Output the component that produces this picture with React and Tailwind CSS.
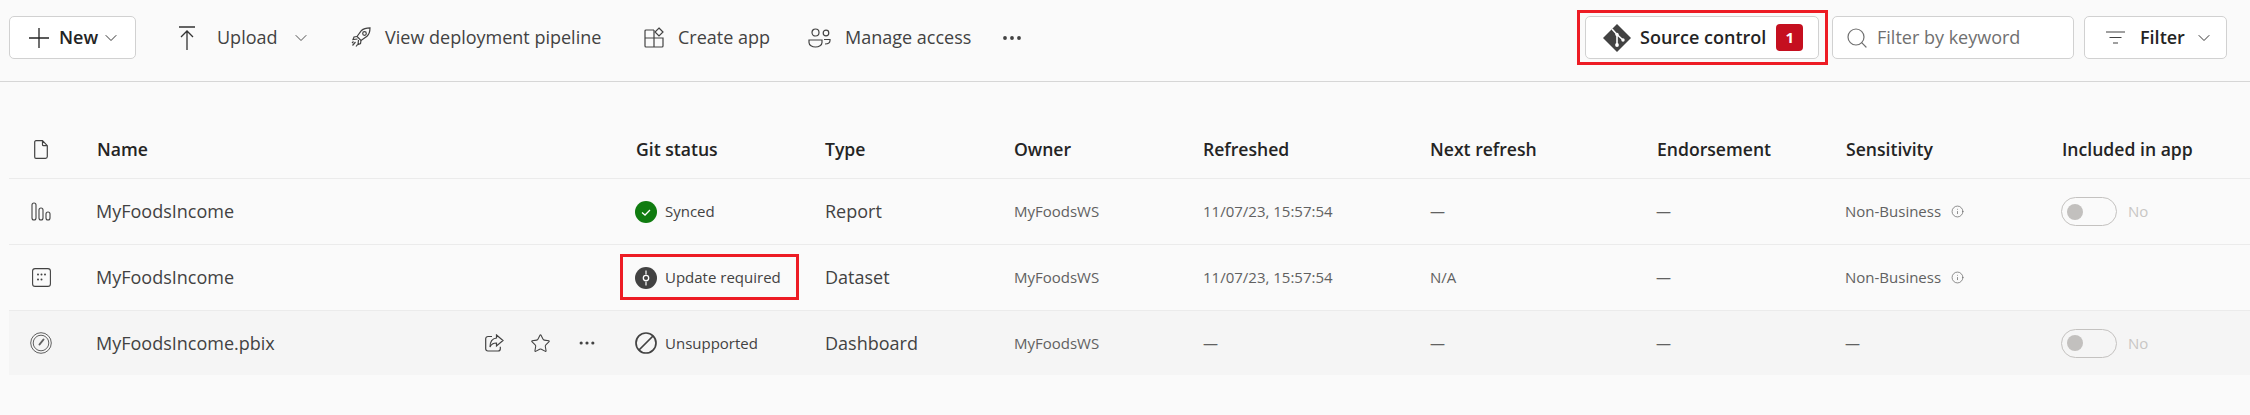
import { ChevronDown, Search, Star, MoreHorizontal, Info } from "lucide-react";

const font = "font-['Open_Sans','Noto_Sans',sans-serif]";

function PlusIcon() {
  return (
    <svg width="20" height="20" viewBox="0 0 20 20" stroke="#242424" strokeWidth="1.300">
      <path d="M10 0v20M0 10h20" />
    </svg>
  );
}

function ArrowUpload() {
  return (
    <svg width="16" height="24" viewBox="0 0 16 24" fill="none" stroke="#333" strokeWidth="1.300">
      <path d="M0 1h16M8 5v19M2 11l6-6 6 6" />
    </svg>
  );
}

function Rocket() {
  return (
    <svg width="20" height="21" viewBox="0 0 20 21" fill="none" stroke="#424242" strokeWidth="1.200">
      <path d="M6 9.500 10.500 3.500C12.500 1.500 15.500.8 19 .8c0 3.500-.8 6.500-3 8.500l-6 4.200z" />
      <circle cx="13.500" cy="6.500" r="1.800" />
      <path d="M6 9.500 3 10l-1 2.500 4.500-.5M10 13.500l-.5 3-2.500 1 .5-4.500M4.500 15l-3 3.500M6.500 17.500 5 19.500M2.500 14.500 1 16" />
    </svg>
  );
}

function CreateApp() {
  return (
    <svg width="20" height="21" viewBox="0 0 20 21" fill="none" stroke="#424242" strokeWidth="1.200">
      <path d="M10 3H2a1 1 0 0 0-1 1v15a1 1 0 0 0 1 1h16a1 1 0 0 0 1-1v-8H1M10 3v17" />
      <path d="m15 1 4 4-4 4-4-4z" />
    </svg>
  );
}

function People() {
  return (
    <svg width="23" height="20" viewBox="0 0 23 20" fill="none" stroke="#424242" strokeWidth="1.200">
      <circle cx="7.500" cy="4.500" r="3.500" />
      <circle cx="18" cy="5" r="2.800" />
      <path d="M1 12h13v2.500c0 2.500-3 4.500-6.500 4.500S1 17 1 14.500zM16 11.500h6v1c0 2-1.500 3.500-5 3.500" />
    </svg>
  );
}

function GitDiamond() {
  return (
    <svg width="28" height="28" viewBox="0 0 28 28" fill="#424242">
      <path d="M14 0 28 14 14 28 0 14z" />
      <path d="m9 5 5 5.500V21m0-10.500 6 5.500" stroke="#fff" strokeWidth="1.600" fill="none" />
      <circle cx="14" cy="21" r="1.900" fill="#fff" />
      <circle cx="20" cy="16" r="1.700" fill="#fff" />
      <circle cx="14" cy="10.500" r="1.700" fill="#fff" />
    </svg>
  );
}

function FilterLines() {
  return (
    <svg width="19" height="13" viewBox="0 0 19 13" stroke="#424242" strokeWidth="1.200">
      <path d="M0 1h19M3.500 6.500h12M7 12h5" />
    </svg>
  );
}

function DocIcon() {
  return (
    <svg width="14" height="19" viewBox="0 0 14 19" fill="none" stroke="#424242" strokeWidth="1.200">
      <path d="M2 .7h6.500l4.800 5v10.800a1.800 1.800 0 0 1-1.800 1.800H2a1.300 1.300 0 0 1-1.300-1.300V2A1.300 1.300 0 0 1 2 .7zM8.500.7v4a1 1 0 0 0 1 1h3.800" />
    </svg>
  );
}

function ReportIcon() {
  return (
    <svg width="20" height="19" viewBox="0 0 20 19" fill="none" stroke="#424242" strokeWidth="1.100">
      <rect x="1" y="1" width="4" height="17" rx="2" />
      <rect x="8" y="6" width="4" height="12" rx="2" />
      <rect x="15" y="10" width="4" height="8" rx="2" />
    </svg>
  );
}

function DatasetIcon() {
  return (
    <svg width="19" height="19" viewBox="0 0 19 19" fill="none">
      <rect x=".6" y=".6" width="17.800" height="17.800" rx="2.500" stroke="#424242" strokeWidth="1.100" />
      <g fill="#424242">
        <circle cx="6" cy="6.500" r="1" />
        <circle cx="9.500" cy="6.500" r="1" />
        <circle cx="13" cy="6.500" r="1" />
        <circle cx="6" cy="11.500" r="1" />
        <circle cx="9.500" cy="11.500" r="1" />
      </g>
    </svg>
  );
}

function DashIcon() {
  return (
    <svg width="22" height="22" viewBox="0 0 22 22" fill="none" stroke="#616161">
      <circle cx="11" cy="11" r="10.300" strokeWidth="1" />
      <circle cx="11" cy="11" r="7.800" strokeWidth="1" />
      <path d="m9.500 12.500 4-5" strokeWidth="2" strokeLinecap="round" />
    </svg>
  );
}

function ShareIcon() {
  return (
    <svg width="19" height="18" viewBox="0 0 19 18" fill="none" stroke="#424242" strokeWidth="1.200">
      <path d="M7 2.500H3a2.300 2.300 0 0 0-2.300 2.300v10A2.300 2.300 0 0 0 3 17h10a2.300 2.300 0 0 0 2.300-2.300v-2" />
      <path d="M11.500 1 18 6.500 11.500 12V9C8 9 6 10.500 5 13c0-5 2.500-8.500 6.500-9z" />
    </svg>
  );
}

function Synced() {
  return (
    <svg width="22" height="22" viewBox="0 0 22 22">
      <circle cx="11" cy="11" r="11" fill="#107c10" />
      <path d="m7 11.500 3 2.500 5-5" stroke="#fff" strokeWidth="1.300" fill="none" />
    </svg>
  );
}

function UpdateReq() {
  return (
    <svg width="22" height="22" viewBox="0 0 22 22">
      <circle cx="11" cy="11" r="11" fill="#424242" />
      <path d="M11 3.500v4M11 14.500v4" stroke="#fff" strokeWidth="1.200" />
      <circle cx="11" cy="11" r="2.700" fill="none" stroke="#fff" strokeWidth="1.300" />
    </svg>
  );
}

function Unsupported() {
  return (
    <svg width="22" height="22" viewBox="0 0 22 22" fill="none" stroke="#424242" strokeWidth="1.700">
      <circle cx="11" cy="11" r="10" />
      <path d="M4 18 18 4" />
    </svg>
  );
}

function Toggle({ show }) {
  if (!show) return null;
  return (
    <div className="-ml-px flex items-center gap-[11px]">
      <div className="flex h-[29px] w-[56px] items-center rounded-full border border-[#c4c2c0] pl-[5px]">
        <div className="h-4 w-4 rounded-full bg-[#c2c0be]" />
      </div>
      <span className="text-[15px] text-[#c8c6c4]">No</span>
    </div>
  );
}

const cols =
  "grid grid-cols-[87px_539px_190px_189px_189px_227px_226px_189px_217px_1fr] items-center";

const rows = [
  {
    icon: <ReportIcon />,
    name: "MyFoodsIncome",
    status: <Synced />,
    statusText: "Synced",
    type: "Report",
    refreshed: "11/07/23, 15:57:54",
    next: "—",
    sens: true,
    toggle: true,
    rowClass: "h-[66px] border-b border-[#ebebeb]",
  },
  {
    icon: <DatasetIcon />,
    name: "MyFoodsIncome",
    status: <UpdateReq />,
    statusText: "Update required",
    type: "Dataset",
    refreshed: "11/07/23, 15:57:54",
    next: "N/A",
    sens: true,
    toggle: false,
    rowClass: "h-[66px] border-b border-[#ebebeb]",
  },
  {
    icon: <DashIcon />,
    name: "MyFoodsIncome.pbix",
    status: <Unsupported />,
    statusText: "Unsupported",
    type: "Dashboard",
    refreshed: "—",
    next: "—",
    sens: false,
    toggle: true,
    hover: true,
    rowClass: "h-[64px] bg-[#f5f5f5]",
  },
];

export default function App() {
  return (
    <div className={`${font} h-[415px] w-[2250px] overflow-hidden bg-[#fafafa] text-[#424242]`}>
      {/* Toolbar */}
      <div className="flex h-[82px] items-start border-b border-[#d6d6d6] pl-[9px] pr-[23px] pt-[16px] text-[18px]">
        <div className="flex h-[43px] w-[127px] items-center rounded-[5px] border border-[#d1d1d1] bg-white pl-[19px] text-[#242424]">
          <PlusIcon />
          <span className="ml-[10px] font-semibold">New</span>
          <ChevronDown size={20} strokeWidth={1.1} className="ml-[3px]" />
        </div>

        <div className="ml-[43px] flex h-[43px] items-center">
          <ArrowUpload />
          <span className="ml-[22px] w-[74px]">Upload</span>
          <ChevronDown size={20} strokeWidth={1.1} />
        </div>

        <div className="ml-[40px] flex h-[43px] items-center">
          <Rocket />
          <span className="ml-[14px] w-[259px]">View deployment pipeline</span>
          <CreateApp />
          <span className="ml-[14px] w-[130px]">Create app</span>
          <People />
          <span className="ml-[14px] w-[155px]">Manage access</span>
          <MoreHorizontal size={24} strokeWidth={1.8} />
        </div>

        {/* Right side */}
        <div className="ml-auto flex items-start">
          <div className="relative flex h-[43px] w-[234px] items-center rounded-[5px] border border-[#d1d1d1] bg-white pl-[17px] text-[#242424]">
            <GitDiamond />
            <span className="ml-[9px] whitespace-nowrap font-semibold">Source control</span>
            <span className="ml-[10px] flex h-[27px] w-[27px] items-center justify-center rounded-[4px] bg-[#c50f1f] text-[15px] font-bold text-white">
              1
            </span>
            {/* Red annotation */}
            <div className="pointer-events-none absolute -left-[9px] -top-[7px] h-[55px] w-[251px] border-[3px] border-[#ed1c24]" />
          </div>

          <div className="ml-[13px] flex h-[43px] w-[242px] items-center rounded-[5px] border border-[#d1d1d1] bg-white pl-[12px] text-[#707070]">
            <Search size={24} strokeWidth={1.2} />
            <span className="ml-[8px] whitespace-nowrap">Filter by keyword</span>
          </div>

          <div className="ml-[10px] flex h-[43px] w-[143px] items-center rounded-[5px] border border-[#d1d1d1] bg-white pl-[21px] text-[#242424]">
            <FilterLines />
            <span className="ml-[15px] font-semibold">Filter</span>
            <ChevronDown size={20} strokeWidth={1.1} className="ml-[9px]" />
          </div>
        </div>
      </div>

      {/* Table */}
      <div className="ml-[9px]">
        <div className={`${cols} mt-[39px] h-[58px] border-b border-[#ebebeb] text-[17.6px] font-semibold text-[#242424]`}>
          <div className="flex w-[64px] justify-center"><DocIcon /></div>
          <div className="pl-px">Name</div>
          <div className="pl-px">Git status</div>
          <div>Type</div>
          <div>Owner</div>
          <div>Refreshed</div>
          <div>Next refresh</div>
          <div className="pl-px">Endorsement</div>
          <div className="pl-px">Sensitivity</div>
          <div>Included in app</div>
        </div>

        {rows.map((r, i) => (
          <div key={i} className={`${cols} ${r.rowClass} text-[15px]`}>
            <div className="flex w-[64px] justify-center">{r.icon}</div>
            <div className="flex items-center justify-between pr-[38px] text-[18px]">
              <span>{r.name}</span>
              {r.hover && (
                <div className="flex items-center gap-[26px]">
                  <ShareIcon />
                  <Star size={21} strokeWidth={1.2} />
                  <MoreHorizontal size={20} strokeWidth={1.8} />
                </div>
              )}
            </div>
            <div className="relative flex items-center gap-[8px]">
              {r.status}
              <span>{r.statusText}</span>
              {r.statusText === "Update required" && (
                <div className="pointer-events-none absolute -left-[15px] -top-[12px] h-[46px] w-[179px] border-[3px] border-[#ed1c24]" />
              )}
            </div>
            <div className="text-[18px]">{r.type}</div>
            <div className="text-[#616161]">MyFoodsWS</div>
            <div className="text-[#616161]">{r.refreshed}</div>
            <div className="text-[#616161]">{r.next}</div>
            <div className="text-[#616161]">—</div>
            <div className="flex items-center gap-[10px] text-[#616161]">
              {r.sens ? "Non-Business" : "—"}
              {r.sens && <Info size={13} strokeWidth={1.3} />}
            </div>
            <Toggle show={r.toggle} />
          </div>
        ))}
      </div>
    </div>
  );
}
